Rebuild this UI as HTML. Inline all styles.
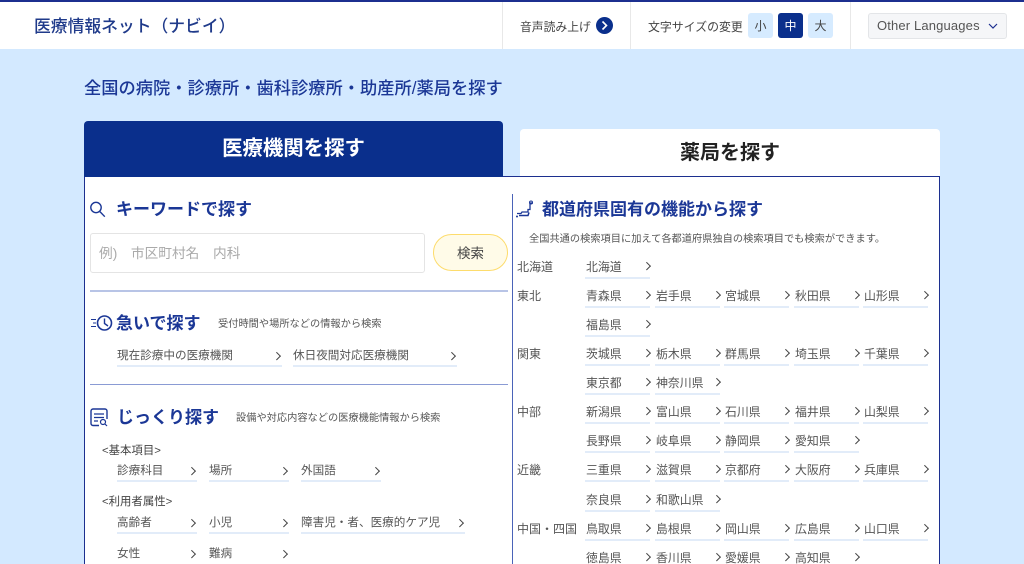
<!DOCTYPE html>
<html lang="ja">
<head>
<meta charset="utf-8">
<title>医療情報ネット（ナビイ）</title>
<style>
html,body{margin:0;padding:0;width:1024px;height:564px;overflow:hidden}
body{background:#d3e9ff;font-family:"Liberation Sans","Noto Sans CJK JP",sans-serif;color:#444}
#p{position:relative;width:1024px;height:564px;overflow:hidden;background:#d3e9ff}
.b{position:absolute;box-sizing:border-box}
.t{position:absolute;white-space:nowrap;line-height:20px;height:20px;margin-top:1px}
.h{font-size:17px;font-weight:700;color:#1b3796}
.s{font-size:10.22px;color:#555}
.r{font-size:12px;color:#555;left:517px}
.l{position:absolute;box-sizing:border-box;height:22px;line-height:22px;margin-top:1px;font-size:11.6px;color:#555;white-space:nowrap;border-bottom:2px solid #e2ecf9}
.l::after{content:"";position:absolute;right:3px;top:7.5px;width:4.5px;height:4.5px;border-top:1px solid #444;border-right:1px solid #444;transform:rotate(45deg)}
.w{width:65px;font-size:11.9px;padding-left:1px;line-height:20px}
.w::after{right:1px;top:6px}
.m{width:80px}
.c1{left:585px}.c2{left:655px}.c3{left:724px}.c4{left:794px}.c5{left:863px}
.fs{position:absolute;top:13px;width:25px;height:25px;line-height:26px;text-align:center;font-size:12px;border-radius:3px;background:#d6ebff;color:#444}
svg{position:absolute;overflow:visible}
</style>
</head>
<body>
<div id="p">
<div class="b" style="left:0;top:0;width:1024px;height:49px;background:#fff;border-top:2px solid #1c2f8f"></div>
<div class="b" style="left:502px;top:2px;width:1px;height:47px;background:#e8e8e8"></div>
<div class="b" style="left:630px;top:2px;width:1px;height:47px;background:#e8e8e8"></div>
<div class="b" style="left:850px;top:2px;width:1px;height:47px;background:#e8e8e8"></div>

<div class="t" style="left:34px;top:16px;font-size:16.8px;font-weight:500;color:#1f3a8a">医療情報ネット（ナビイ）</div>
<div class="t" style="left:520px;top:16px;font-size:11.8px;color:#444">音声読み上げ</div>
<svg style="left:596px;top:17px" width="17" height="17" viewBox="0 0 17 17"><circle cx="8.5" cy="8.5" r="8.5" fill="#0a2f8c"/><path d="M6.5 4.5l4 4-4 4" fill="none" stroke="#fff" stroke-width="1.6"/></svg>
<div class="t" style="left:648px;top:16px;font-size:11.9px;color:#444">文字サイズの変更</div>
<div class="fs" style="left:748px">小</div>
<div class="fs" style="left:778px;background:#0a2f8c;color:#fff">中</div>
<div class="fs" style="left:808px">大</div>
<div class="b" style="left:868px;top:13px;width:139px;height:26px;background:#f5f6f8;border:1px solid #e3e5e8;border-radius:3px"></div>
<div class="t" style="left:877px;top:15px;font-size:13px;letter-spacing:.15px;color:#555">Other Languages</div>
<svg style="left:988px;top:23px" width="10" height="6" viewBox="0 0 10 6"><path d="M1 1l4 4 4-4" fill="none" stroke="#1c2f8f" stroke-width="1.2"/></svg>

<div class="t" style="left:84px;top:77px;font-size:17.25px;font-weight:500;color:#1b3796">全国の病院・診療所・歯科診療所・助産所/薬局を探す</div>

<div class="b" style="left:520px;top:129px;width:420px;height:48px;background:#fff;border-radius:4px 4px 0 0"></div>
<div class="t" style="left:520px;width:420px;text-align:center;top:142px;font-size:20px;font-weight:700;color:#222">薬局を探す</div>
<div class="b" style="left:84px;top:176px;width:856px;height:400px;background:#fff;border:1.5px solid #1c2f8f"></div>
<div class="b" style="left:84px;top:121px;width:419px;height:56px;background:#0a2f8c;border-radius:4px 4px 0 0"></div>
<div class="t" style="left:84px;width:419px;text-align:center;top:138px;font-size:20.4px;font-weight:700;color:#fff">医療機関を探す</div>

<div class="b" style="left:512px;top:194px;width:1px;height:370px;background:#4a63b8"></div>

<!-- left column -->
<svg style="left:90px;top:200px" width="17" height="18" viewBox="0 0 17 18"><circle cx="6" cy="7.5" r="5.2" fill="none" stroke="#1b3796" stroke-width="1.4"/><path d="M9.8 11.5l5 5.2" stroke="#1b3796" stroke-width="1.4" fill="none"/></svg>
<div class="t h" style="left:116px;top:199px">キーワードで探す</div>
<div class="b" style="left:90px;top:233px;width:335px;height:40px;border:1px solid #e4e4e4;border-radius:3px;background:#fff"></div>
<div class="t" style="left:99px;top:243px;font-size:13.7px;color:#aaa">例)　市区町村名　内科</div>
<div class="b" style="left:433px;top:234px;width:75px;height:37px;background:#fffbe8;border:1.5px solid #fddc6c;border-radius:19px"></div>
<div class="t" style="left:433px;width:75px;text-align:center;top:243px;font-size:13.5px;color:#444">検索</div>
<div class="b" style="left:90px;top:290px;width:418px;height:1.5px;background:#b8c4e6"></div>

<svg style="left:90px;top:314px" width="22" height="19" viewBox="0 0 22 19"><circle cx="14.5" cy="9" r="7" fill="none" stroke="#1b3796" stroke-width="1.6"/><path d="M14.5 4.5v5l3.5 2.5" fill="none" stroke="#1b3796" stroke-width="1.4"/><path d="M1 5.5h5M3 9h3M1 12.5h5" stroke="#1b3796" stroke-width="1.1" fill="none"/></svg>
<div class="t h" style="left:116px;top:313px">急いで探す</div>
<div class="t s" style="left:218px;top:314px">受付時間や場所などの情報から検索</div>
<div class="l" style="left:117px;top:344px;width:165px">現在診療中の医療機関</div>
<div class="l" style="left:293px;top:344px;width:164px">休日夜間対応医療機関</div>
<div class="b" style="left:90px;top:384px;width:418px;height:1px;background:#8a9bd4"></div>

<svg style="left:90px;top:408px" width="18" height="19" viewBox="0 0 18 19"><path d="M9 17.5H3a2 2 0 0 1-2-2V3a2 2 0 0 1 2-2h12a2 2 0 0 1 2 2v8" fill="none" stroke="#1b3796" stroke-width="1.4"/><path d="M4 6h10M4 9.5h10M4 13h4" stroke="#1b3796" stroke-width="1.2" fill="none"/><circle cx="13" cy="14" r="2.5" fill="none" stroke="#1b3796" stroke-width="1.2"/><path d="M15 16l2 2" stroke="#1b3796" stroke-width="1.2"/></svg>
<div class="t h" style="left:117px;top:407px">じっくり探す</div>
<div class="t s" style="left:236px;top:408px">設備や対応内容などの医療機能情報から検索</div>

<div class="t" style="left:102px;top:440px;font-size:11.4px;color:#444">&lt;基本項目&gt;</div>
<div class="l m" style="left:117px;top:459px">診療科目</div>
<div class="l m" style="left:209px;top:459px">場所</div>
<div class="l m" style="left:301px;top:459px">外国語</div>
<div class="t" style="left:102px;top:491px;font-size:11.4px;color:#444">&lt;利用者属性&gt;</div>
<div class="l m" style="left:117px;top:511px">高齢者</div>
<div class="l m" style="left:209px;top:511px">小児</div>
<div class="l" style="left:301px;top:511px;width:164px">障害児・者、医療的ケア児</div>
<div class="l m" style="left:117px;top:542px;border-bottom-color:transparent">女性</div>
<div class="l m" style="left:209px;top:542px;border-bottom-color:transparent">難病</div>

<!-- right column -->
<svg style="left:516px;top:200px" width="18" height="18" viewBox="0 0 18 18"><path d="M1 13.5h4l1-1.5h6v-2.5h2V3h3" fill="none" stroke="#1b3796" stroke-width="1.3"/><path d="M3 15.5h9l1-3" fill="none" stroke="#1b3796" stroke-width="1.5"/><circle cx="15" cy="2.5" r="1.5" fill="none" stroke="#1b3796"/><circle cx="1" cy="16.5" r="1" fill="#1b3796"/></svg>
<div class="t h" style="left:542px;top:199px">都道府県固有の機能から探す</div>
<div class="t s" style="left:529px;top:229px">全国共通の検索項目に加えて各都道府県独自の検索項目でも検索ができます。</div>

<div class="t r" style="top:256px">北海道</div>
<div class="t r" style="top:285px">東北</div>
<div class="t r" style="top:343px">関東</div>
<div class="t r" style="top:401px">中部</div>
<div class="t r" style="top:459px">近畿</div>
<div class="t r" style="top:518px">中国・四国</div>

<div class="l w c1" style="top:256px">北海道</div>

<div class="l w c1" style="top:285px">青森県</div>
<div class="l w c2" style="top:285px">岩手県</div>
<div class="l w c3" style="top:285px">宮城県</div>
<div class="l w c4" style="top:285px">秋田県</div>
<div class="l w c5" style="top:285px">山形県</div>

<div class="l w c1" style="top:314px">福島県</div>

<div class="l w c1" style="top:343px">茨城県</div>
<div class="l w c2" style="top:343px">栃木県</div>
<div class="l w c3" style="top:343px">群馬県</div>
<div class="l w c4" style="top:343px">埼玉県</div>
<div class="l w c5" style="top:343px">千葉県</div>

<div class="l w c1" style="top:372px">東京都</div>
<div class="l w c2" style="top:372px">神奈川県</div>

<div class="l w c1" style="top:401px">新潟県</div>
<div class="l w c2" style="top:401px">富山県</div>
<div class="l w c3" style="top:401px">石川県</div>
<div class="l w c4" style="top:401px">福井県</div>
<div class="l w c5" style="top:401px">山梨県</div>

<div class="l w c1" style="top:430px">長野県</div>
<div class="l w c2" style="top:430px">岐阜県</div>
<div class="l w c3" style="top:430px">静岡県</div>
<div class="l w c4" style="top:430px">愛知県</div>

<div class="l w c1" style="top:459px">三重県</div>
<div class="l w c2" style="top:459px">滋賀県</div>
<div class="l w c3" style="top:459px">京都府</div>
<div class="l w c4" style="top:459px">大阪府</div>
<div class="l w c5" style="top:459px">兵庫県</div>

<div class="l w c1" style="top:489px">奈良県</div>
<div class="l w c2" style="top:489px">和歌山県</div>

<div class="l w c1" style="top:518px">鳥取県</div>
<div class="l w c2" style="top:518px">島根県</div>
<div class="l w c3" style="top:518px">岡山県</div>
<div class="l w c4" style="top:518px">広島県</div>
<div class="l w c5" style="top:518px">山口県</div>

<div class="l w c1" style="top:547px">徳島県</div>
<div class="l w c2" style="top:547px">香川県</div>
<div class="l w c3" style="top:547px">愛媛県</div>
<div class="l w c4" style="top:547px">高知県</div>
</div>
</body>
</html>
